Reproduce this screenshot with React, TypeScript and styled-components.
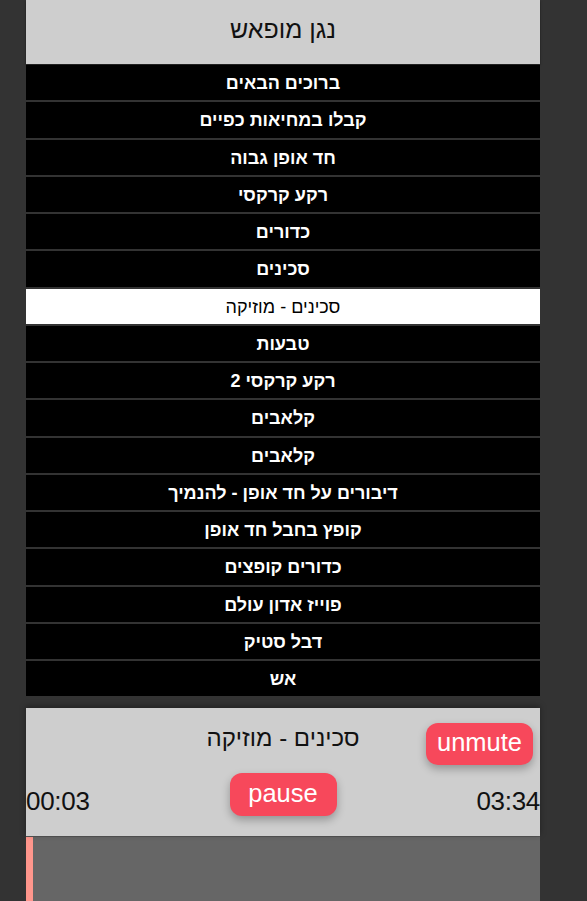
import React from "react";
import styled, { createGlobalStyle } from "styled-components";

const Global = createGlobalStyle`
  html, body { margin: 0; padding: 0; background: #333333; }
  body { font-family: "Liberation Sans", Arial, sans-serif; }
  * { box-sizing: border-box; }
`;

const Page = styled.div`
  width: 514px;
  margin-left: 26px;
  display: flex;
  flex-direction: column;
  direction: rtl;
`;

const Header = styled.header`
  height: 64px;
  background: #cecece;
  display: flex;
  align-items: center;
  justify-content: center;
  padding-bottom: 6px;
  font-size: 25px;
  color: #111;
  box-shadow: 0 1px 2px rgba(0, 0, 0, 0.5);
  position: relative;
  z-index: 1;
`;

const List = styled.ul`
  list-style: none;
  margin: 1px 0 0 0;
  padding: 0;
`;

const Row = styled.li<{ $active?: boolean }>`
  height: 37.25px;
  border-bottom: 2px solid #333333;
  background: ${(p) => (p.$active ? "#ffffff" : "#000000")};
  color: ${(p) => (p.$active ? "#000000" : "#ffffff")};
  font-weight: ${(p) => (p.$active ? "normal" : "bold")};
  font-size: 18px;
  display: flex;
  align-items: center;
  justify-content: center;
  padding-top: 2px;
`;

const Player = styled.section`
  margin-top: 10px;
  height: 128px;
  background: #cecece;
  box-shadow: 0 -2px 6px rgba(0, 0, 0, 0.35);
  position: relative;
  display: flex;
  flex-direction: column;
  align-items: stretch;
`;

const NowPlaying = styled.div`
  margin-top: 17px;
  text-align: center;
  font-size: 24px;
  color: #111;
  height: 26px;
  line-height: 26px;
`;

const Controls = styled.div`
  margin-top: 22px;
  display: flex;
  direction: ltr;
  justify-content: space-between;
  align-items: flex-start;
`;

const Time = styled.span<{ $right?: boolean }>`
  font-size: 26px;
  color: #111;
  line-height: 26px;
  width: 90px;
  margin-top: 15px;
  text-align: ${(p) => (p.$right ? "right" : "left")};
  letter-spacing: -0.3px;
`;

const Button = styled.button`
  border: none;
  background: #f7485b;
  color: #fff;
  font-family: "Liberation Sans", Arial, sans-serif;
  font-size: 25.5px;
  border-radius: 12px;
  box-shadow: 0 4px 8px rgba(0, 0, 0, 0.28);
  padding: 0 0 3px 0;
  display: flex;
  align-items: center;
  justify-content: center;
`;

const PauseButton = styled(Button)`
  width: 107px;
  height: 43px;
`;

const MuteButton = styled(Button)`
  position: absolute;
  top: 15px;
  right: 7px;
  width: 107px;
  height: 42px;
`;

const Track = styled.div`
  height: 70px;
  background: #666666;
  border-top: 1px solid #555;
  display: flex;
  direction: ltr;
`;

const Progress = styled.div`
  height: 100%;
  background: #ff968c;
`;

const songs = [
  "ברוכים הבאים",
  "קבלו במחיאות כפיים",
  "חד אופן גבוה",
  "רקע קרקסי",
  "כדורים",
  "סכינים",
  "סכינים - מוזיקה",
  "טבעות",
  "רקע קרקסי 2",
  "קלאבים",
  "קלאבים",
  "דיבורים על חד אופן - להנמיך",
  "קופץ בחבל חד אופן",
  "כדורים קופצים",
  "פוייז אדון עולם",
  "דבל סטיק",
  "אש",
];

export default function App() {
  const active = 6;
  const progress = 3 / 214;
  return (
    <>
      <Global />
      <Page>
        <Header>נגן מופאש</Header>
        <List>
          {songs.map((s, i) => (
            <Row key={i} $active={i === active}>
              {s}
            </Row>
          ))}
        </List>
        <Player>
          <NowPlaying>{songs[active]}</NowPlaying>
          <MuteButton>unmute</MuteButton>
          <Controls>
            <Time>00:03</Time>
            <PauseButton>pause</PauseButton>
            <Time $right>03:34</Time>
          </Controls>
        </Player>
        <Track>
          <Progress style={{ width: `${Math.max(7, progress * 514)}px` }} />
        </Track>
      </Page>
    </>
  );
}
